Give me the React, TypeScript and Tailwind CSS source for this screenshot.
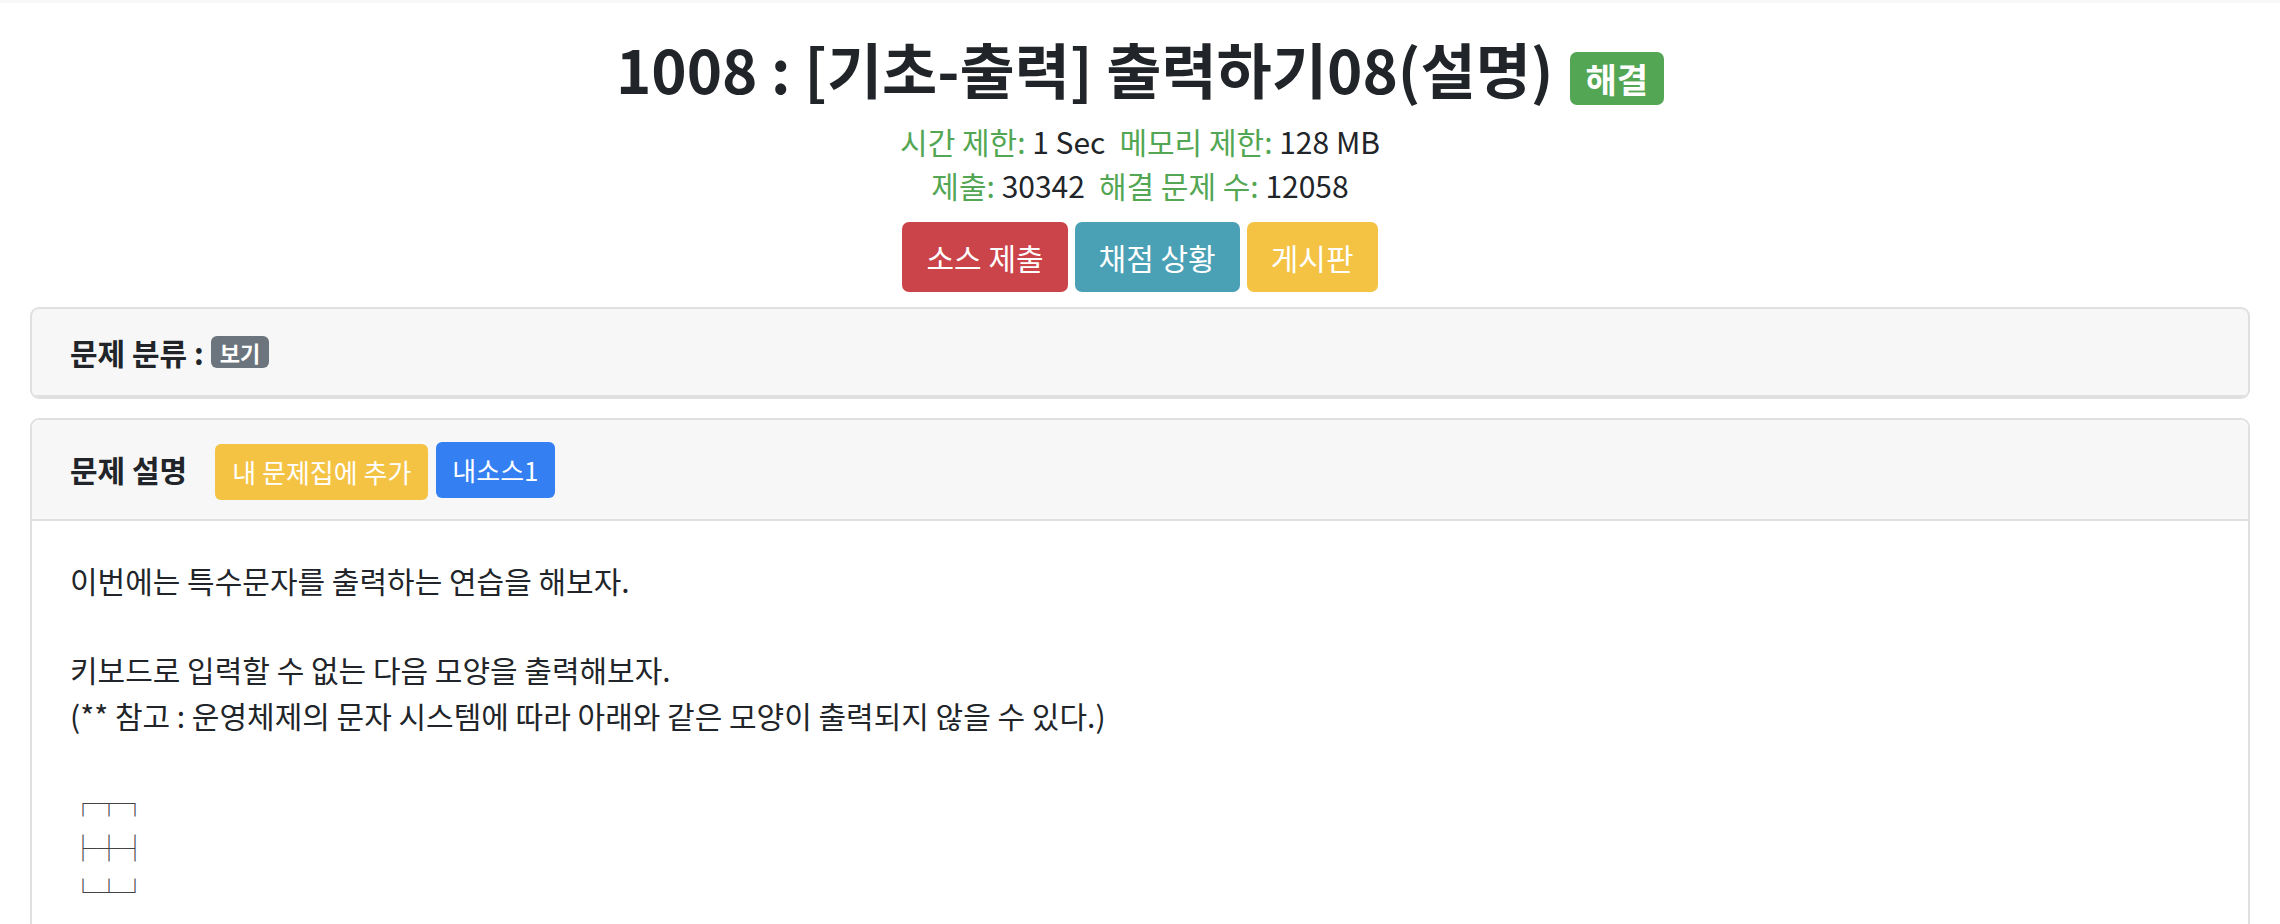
import React from 'react';

const LABEL = 'text-[#53a653]';

function InfoLine({ items }: { items: [string, string][] }) {
    return (
        <div className="flex justify-center text-[30px] leading-[44px]">
            {items.map(([label, value], i) => (
                <span key={label} className={i > 0 ? 'ml-[14px]' : ''}>
                    <span className={LABEL}>{label}:</span> {value}
                </span>
            ))}
        </div>
    );
}

export default function App() {
    return (
        <div className="min-h-screen bg-white text-[#212529] font-['Noto_Sans_CJK_KR','Noto_Sans',sans-serif]">
            {/* top strip */}
            <div className="h-[3px] bg-[#f5f7f9]" />

            <div className="px-[30px]">
                {/* Title */}
                <div className="pt-[30px] flex justify-center items-start">
                    <h2 className="text-[60px] leading-[70px] font-bold">
                        1008 : [기초-출력] 출력하기08(설명)
                    </h2>
                    <span className="ml-[16px] mt-[19px] h-[53px] px-[16px] rounded-[7px] bg-[#53a653] text-white font-bold text-[34px] leading-[53px]">
                        해결
                    </span>
                </div>

                <div className="mt-[14px]">
                    <InfoLine items={[['시간 제한', '1 Sec'], ['메모리 제한', '128 MB']]} />
                    <InfoLine items={[['제출', '30342'], ['해결 문제 수', '12058']]} />
                </div>

                {/* Buttons */}
                <div className="mt-[15px] flex justify-center gap-[7px]">
                    <button className="h-[70px] px-[24px] rounded-[7px] bg-[#cb444a] text-white text-[30px]">소스 제출</button>
                    <button className="h-[70px] px-[24px] rounded-[7px] bg-[#4aa0b5] text-white text-[30px]">채점 상황</button>
                    <button className="h-[70px] px-[24px] rounded-[7px] bg-[#f4c344] text-white text-[30px]">게시판</button>
                </div>

                {/* 문제 분류 */}
                <div className="mt-[15px] rounded-[9px] border-2 border-[#e0e0e0] bg-[#f7f7f7] overflow-hidden">
                    <div className="h-[88px] px-[38px] flex items-center border-b-2 border-[#e0e0e0] text-[30px] font-bold">
                        문제 분류 :
                        <span className="ml-[7px] h-[32px] px-[9px] rounded-[6px] bg-[#6c757d] text-white text-[22px] leading-[32px]">
                            보기
                        </span>
                    </div>
                </div>

                {/* 문제 설명 */}
                <div className="mt-[19px] rounded-t-[9px] border-2 border-b-0 border-[#e0e0e0] bg-white">
                    <div className="h-[101px] px-[38px] flex items-center bg-[#f7f7f7] rounded-t-[9px] border-b-2 border-[#e0e0e0]">
                        <span className="text-[30px] font-bold">문제 설명</span>
                        <button className="ml-[28px] mt-[4px] h-[56px] px-[17px] rounded-[6px] bg-[#f4c344] text-white text-[26px]">
                            내 문제집에 추가
                        </button>
                        <button className="ml-[8px] h-[56px] px-[16px] rounded-[6px] bg-[#3480f3] text-white text-[26px]">
                            내소스1
                        </button>
                    </div>

                    <div className="px-[38px] pt-[37px] pb-[60px] text-[30px]">
                        <p className="leading-[44px]">이번에는 특수문자를 출력하는 연습을 해보자.</p>
                        <div className="h-[44px]" />
                        <p className="leading-[46px]">
                            키보드로 입력할 수 없는 다음 모양을 출력해보자.
                            <br />
                            (** 참고 : 운영체제의 문자 시스템에 따라 아래와 같은 모양이 출력되지 않을 수 있다.)
                        </p>
                        <div className="mt-[42px] leading-[44.5px] text-[26px] font-medium text-[#444]">
                            <div>┌┬┐</div>
                            <div>├┼┤</div>
                            <div>└┴┘</div>
                        </div>
                    </div>
                </div>
            </div>
        </div>
    );
}
